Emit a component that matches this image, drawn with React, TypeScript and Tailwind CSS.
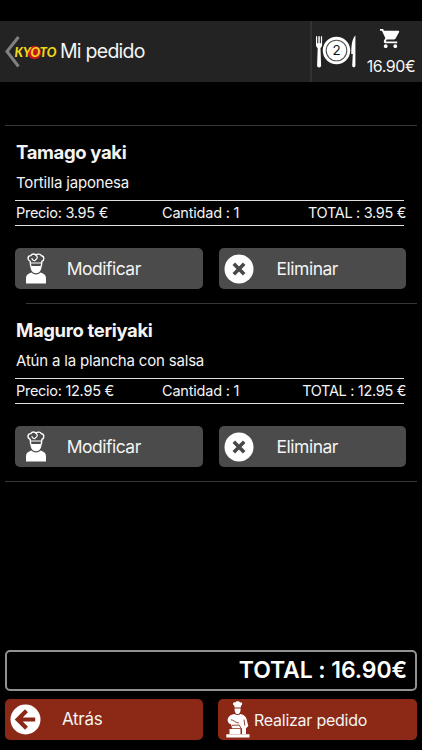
import type { ReactNode } from 'react';
import { MdShoppingCart } from 'react-icons/md';

interface OrderItem {
  name: string;
  description: string;
  price: string;
  quantity: number;
  total: string;
}

const items: OrderItem[] = [
  { name: 'Tamago yaki', description: 'Tortilla japonesa', price: '3.95 €', quantity: 1, total: '3.95 €' },
  { name: 'Maguro teriyaki', description: 'Atún a la plancha con salsa', price: '12.95 €', quantity: 1, total: '12.95 €' },
];

function KyotoLogo() {
  return (
    <svg width="44" height="18" viewBox="0 0 44 18" className="shrink-0">
      <circle cx="20.5" cy="9.5" r="6.8" fill="#c4161c" />
      <text
        x="0.5"
        y="13.7"
        textLength="42"
        lengthAdjust="spacingAndGlyphs"
        fontFamily="Lato, sans-serif"
        fontWeight="900"
        fontStyle="italic"
        fontSize="13"
        fill="#f0d51c"
      >
        KYOTO
      </text>
    </svg>
  );
}

function PlateIcon({ count }: { count: number }) {
  return (
    <svg width="42" height="34" viewBox="0 0 42 34" fill="#fff">
      {/* fork */}
      <path d="M1 1.2h1.200v7h1.100V1.200h1.500v7h1.100V1.200H7.100v8.600c0 1.800-.8 2.600-1.600 3.200L6.100 30.500c.1 2.600-4.100 2.600-4 0L2.700 13C1.800 12.400 1 11.600 1 9.800z" />
      <circle cx="21.500" cy="15.500" r="13.700" />
      <circle cx="21.500" cy="15.500" r="10.300" fill="none" stroke="#555" strokeWidth="1.100" />
      {/* knife */}
      <path d="M40.400.6v29.900c0 2.400-3.200 2.400-3.200 0l.6-11.500h-1.500c-.1-8 .8-15.500 4.100-18.400z" />
      <text x="21.500" y="20.300" textAnchor="middle" fontFamily="Inter, sans-serif" fontSize="13.500" fill="#111">
        {count}
      </text>
    </svg>
  );
}

function CookIcon() {
  return (
    <svg width="20" height="31" viewBox="0 0 20 31">
      <path
        d="M4.700 13.500 4.200 8.300C1.200 7.300 1.200 2.600 4.800 2.600 6 .4 9 .5 10 2.200c1.500-1.600 4.500-1.500 5.400.5 3.100.2 3.100 4.600.5 5.600l-.6 5.200"
        fill="none"
        stroke="#fff"
        strokeWidth="1.400"
      />
      <path d="M10 2.200c2.200 1.400 1.300 4.200-1 4.600M5.800 5.200c.4 1.800 2 2.800 3.800 2.200M4.500 10h11" fill="none" stroke="#fff" strokeWidth="1.200" />
      <path d="M4.500 13h11c.4 3.400-2 7.300-5.500 7.300S4.100 16.400 4.500 13z" fill="#fff" />
      <path d="M0 30.500v-5.300c0-3 2.200-4.600 5.300-5.600 2.700 2.600 6.700 2.600 9.400 0 3.100 1 5.300 2.600 5.300 5.600v5.300z" fill="#fff" />
    </svg>
  );
}

function CloseIcon() {
  return (
    <svg width="30" height="30" viewBox="0 0 30 30">
      <circle cx="15" cy="15" r="14.500" fill="#fff" />
      <path d="m9.800 9.800 10.400 10.400M20.200 9.800 9.800 20.200" stroke="#484848" strokeWidth="3.600" />
    </svg>
  );
}

function BackIcon() {
  return (
    <svg width="31" height="31" viewBox="0 0 31 31">
      <circle cx="15.500" cy="15.500" r="15" fill="#fff" />
      <path d="M16.500 6.800 7.700 15.500l8.800 8.700M8.500 15.500h16.700" fill="none" stroke="#8b2916" strokeWidth="4.200" />
    </svg>
  );
}

function ChefIcon() {
  return (
    <svg width="24" height="37" viewBox="0 0 24 37" fill="#fff">
      <path d="M8.600 6.500 8.200 4.500C6 3.500 7 .9 9.200 1.400c1-1.700 4-1.700 4.900 0 2.200-.4 2.900 2.200 1 3.100l-.4 2z" />
      <path d="M8.600 7.400h6c.2 2.600-.7 5.700-3 5.700s-3.200-3.100-3-5.700z" />
      <path d="M8.500 13c2 1.400 4.200 1.400 6.200 0 3.400.8 5.200 2.400 6 5.500l1.600 6.500-2.200 2.300H6l-.8-3.700C2 22.500 1 19.500 2 17.300c1.200-2.600 3.300-3.800 6.500-4.300z" />
      <path d="M4.800 18.800c2.500-.2 5 3.400 8 3.200M6 24.300l7.200-.2 1.800 3M18 18.500l.8 6" fill="none" stroke="#8b2916" strokeWidth=".9" />
      <path d="M3.500 28h11v5h-11zM16 27h4v6h-4zM.3 33.300h23.200v3.200H.3z" />
    </svg>
  );
}

function ActionButton({ icon, label }: { icon: ReactNode; label: string }) {
  return (
    <button className="flex h-[41px] flex-1 items-center rounded-[5px] bg-[#4b4b4b]">
      <span className="flex w-[41px] shrink-0 justify-center">{icon}</span>
      <span className="flex-1 pt-px pr-[51px] text-center text-[17.5px] tracking-[-0.5px]">{label}</span>
    </button>
  );
}

function OrderRow({ item }: { item: OrderItem }) {
  return (
    <div className="h-[177px] pt-[13px] pr-[11px] pl-[10px]">
      <h2 className="pl-px text-[18.5px] leading-[26px] font-bold tracking-[-0.35px]">{item.name}</h2>
      <p className="mt-2 pl-px text-[15px] leading-5 tracking-[-0.18px]">{item.description}</p>
      <div className="mt-[7px] mr-[2px] grid h-[26px] grid-cols-[147px_1fr_auto] items-center border-y border-[#dedede] text-[14.5px] leading-5 tracking-[-0.32px]">
        <span className="pl-px tracking-[-0.28px]">Precio: {item.price}</span>
        <span className="tracking-[-0.2px]">Cantidad : {item.quantity}</span>
        <span className="-mr-[2px]">TOTAL : {item.total}</span>
      </div>
      <div className="mt-[22px] flex gap-4">
        <ActionButton icon={<CookIcon />} label="Modificar" />
        <ActionButton icon={<CloseIcon />} label="Eliminar" />
      </div>
    </div>
  );
}

export default function App() {
  return (
    <div className="flex h-[750px] w-[422px] flex-col bg-black pt-[21px] font-['Inter',sans-serif] text-[#f4f4f4]">
      <header className="flex h-[61px] shrink-0 bg-[#232323]">
        <div className="flex w-[312px] items-center border-r-2 border-[#323232] pl-[5px]">
          <svg width="15" height="32" viewBox="0 0 15 32" className="-mr-[6px] shrink-0">
            <path d="M13.500 1 2 15.500 13.500 30.500" fill="none" stroke="#818181" strokeWidth="3" />
          </svg>
          <KyotoLogo />
          <h1 className="ml-[2px] text-[19.5px] tracking-[-0.75px]">Mi pedido</h1>
        </div>
        <div className="flex w-[48px] items-center justify-center pt-[1px]">
          <PlateIcon count={2} />
        </div>
        <div className="flex flex-1 flex-col items-center pt-[6px]">
          <MdShoppingCart size={23} color="#fff" className="-ml-[2px]" />
          <span className="mt-[6px] text-[16px] leading-5 tracking-[-0.45px]">16.90€</span>
        </div>
      </header>

      <main className="mt-[43px] px-[5px]">
        <div className="h-px bg-[#383838]" />
        <OrderRow item={items[0]} />
        <div className="ml-[21px] h-px bg-[#383838]" />
        <OrderRow item={items[1]} />
        <div className="h-px bg-[#383838]" />
      </main>

      <footer className="mt-auto px-[5px] pb-[10px]">
        <div className="flex h-[41px] items-center justify-end rounded-[5px] border-2 border-[#929292] pr-[8px] text-[23px] font-semibold tracking-[-0.1px] text-white">
          TOTAL : 16.90€
        </div>
        <div className="mt-2 flex gap-[15px]">
          <button className="flex h-[41px] w-[198px] items-center rounded-[5px] bg-[#8b2916] pl-[5px]">
            <BackIcon />
            <span className="ml-[21px] pt-px text-[17px] tracking-[-0.3px]">Atrás</span>
          </button>
          <button className="flex h-[41px] flex-1 items-center rounded-[5px] bg-[#8b2916] pl-[8px]">
            <ChefIcon />
            <span className="ml-[4px] text-[16px] tracking-[-0.25px]">Realizar pedido</span>
          </button>
        </div>
      </footer>
    </div>
  );
}
